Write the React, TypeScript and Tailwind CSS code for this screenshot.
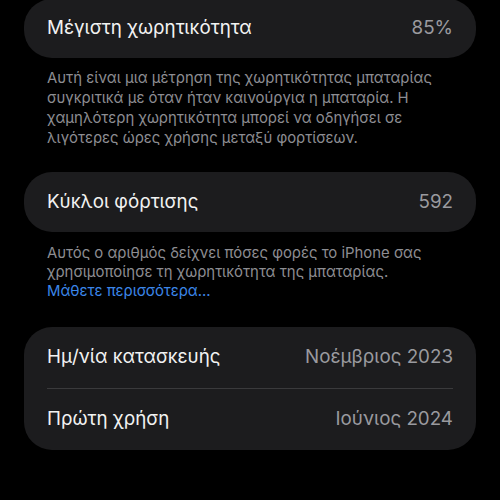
import React from "react";

const font = { fontFamily: "Inter, 'Noto Sans', sans-serif" };

export default function App() {
  return (
    <div className="w-[500px] h-[500px] bg-black overflow-hidden" style={font}>
      <div className="px-[24px]">
        <div className="h-[59px] rounded-[28px] bg-[#1c1c1e] flex items-center justify-between px-[23px] -mt-px">
          <span className="text-[18.8px] text-[#f2f2f2]">Μέγιστη χωρητικότητα</span>
          <span className="text-[18.8px] text-[#9a9a9f]">85%</span>
        </div>
        <p className="px-[23px] mt-[10px] text-[14.9px] leading-[20px] text-[#8d8d92]">
          Αυτή είναι μια μέτρηση της χωρητικότητας μπαταρίας συγκριτικά με όταν ήταν καινούργια η μπαταρία. Η χαμηλότερη χωρητικότητα μπορεί να οδηγήσει σε λιγότερες ώρες χρήσης μεταξύ φορτίσεων.
        </p>
        <div className="mt-[24px] h-[60px] rounded-[28px] bg-[#1c1c1e] flex items-center justify-between px-[23px]">
          <span className="text-[18.8px] text-[#f2f2f2]">Κύκλοι φόρτισης</span>
          <span className="text-[18.8px] text-[#9a9a9f]">592</span>
        </div>
        <p className="px-[23px] mt-[12px] text-[14.9px] leading-[19px] text-[#8d8d92]">
          Αυτός ο αριθμός δείχνει πόσες φορές το iPhone σας χρησιμοποίησε τη χωρητικότητα της μπαταρίας.
          <br />
          <span className="text-[#3b86e8]">Μάθετε περισσότερα...</span>
        </p>
        <div className="mt-[26px] rounded-[28px] bg-[#1c1c1e] px-[23px]">
          <div className="h-[61px] flex items-center justify-between">
            <span className="text-[18.8px] text-[#f2f2f2]">Ημ/νία κατασκευής</span>
            <span className="text-[18.8px] text-[#9a9a9f]">Νοέμβριος 2023</span>
          </div>
          <div className="h-px bg-[#3a3a3c]" />
          <div className="h-[61px] flex items-center justify-between">
            <span className="text-[18.8px] text-[#f2f2f2]">Πρώτη χρήση</span>
            <span className="text-[18.8px] text-[#9a9a9f]">Ιούνιος 2024</span>
          </div>
        </div>
      </div>
    </div>
  );
}
